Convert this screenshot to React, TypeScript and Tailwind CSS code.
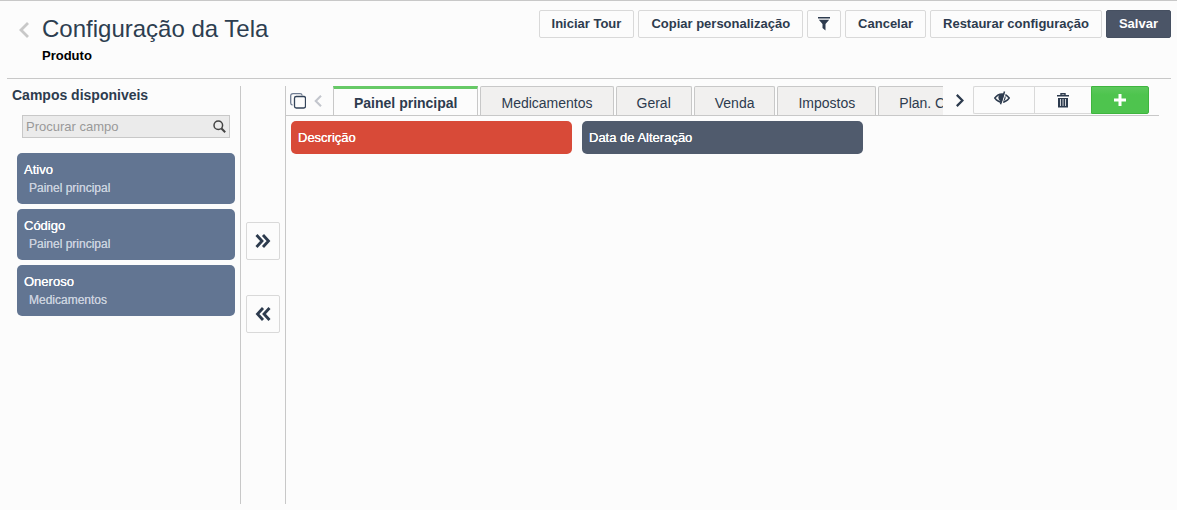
import React from 'react';

interface Field {
  id: string;
  label: string;
  panel: string;
}

const availableFields: Field[] = [
  { id: 'ativo', label: 'Ativo', panel: 'Painel principal' },
  { id: 'codigo', label: 'Código', panel: 'Painel principal' },
  { id: 'oneroso', label: 'Oneroso', panel: 'Medicamentos' }
];

const tabs = ['Painel principal', 'Medicamentos', 'Geral', 'Venda', 'Impostos', 'Plan. Contas'];

const panelFields = [
  { id: 'descricao', label: 'Descrição', color: 'bg-[#d84a38]' },
  { id: 'data_alteracao', label: 'Data de Alteração', color: 'bg-[#505b6d]' }
];

interface ChevronProps {
  className?: string;
  direction: 'left' | 'right';
}

const Chevron: React.FC<ChevronProps> = ({ className, direction }) => (
  <svg viewBox="0 0 10 16" fill="none" stroke="currentColor" className={className}>
    <path d={direction === 'left' ? 'M9 1 2 8l7 7' : 'M1 1l7 7-7 7'} strokeWidth="2.8" />
  </svg>
);

const DoubleChevron: React.FC<{ direction: 'left' | 'right' }> = ({ direction }) => (
  <svg viewBox="0 0 16 14" fill="none" stroke="currentColor" strokeWidth="2.8" className="w-4 h-3.5">
    {direction === 'right' ? (
      <path d="M1.5 1 7 7l-5.5 6M8 1l5.500 6L8 13" />
    ) : (
      <path d="M8 1 2.500 7 8 13M14.500 1 9 7l5.500 6" />
    )}
  </svg>
);

const FilterIcon = () => (
  <svg viewBox="0 0 12 14" fill="currentColor" className="w-3 h-3.5">
    <path d="M0 0h12v1.500H0ZM.8 2.800h10.400L7.500 7v6.500L4.500 11V7Z" />
  </svg>
);

const CopyIcon = () => (
  <svg viewBox="0 0 16 16" fill="none" className="w-4 h-4">
    <path d="M2.500 12C1.200 11.800.7 11.200.7 10V3C.7 1.500 1.500.7 3 .7h7c1.300 0 2 .6 2.200 1.800" stroke="#6f7c92" strokeWidth="1.300" />
    <rect x="4.500" y="3.500" width="11" height="11.500" rx="1.800" stroke="#34445a" strokeWidth="1.300" />
  </svg>
);

const SearchIcon = () => (
  <svg viewBox="0 0 13 13" fill="none" stroke="#444" className="w-[13px] h-[13px]">
    <circle cx="5.300" cy="5.300" r="4.300" strokeWidth="1.500" />
    <path d="M8.500 8.500 12.200 12.200" strokeWidth="2" />
  </svg>
);

const EyeOffIcon = () => (
  <svg viewBox="0 0 16 14" fill="none" stroke="currentColor" className="w-4 h-3.5">
    <path d="M.8 7C3 4 5.300 2.900 8 2.900S13 4 15.200 7C13 10 10.700 11.100 8 11.100S3 10 .8 7Z" strokeWidth="1.500" />
    <circle cx="8" cy="6.600" r="3.600" fill="currentColor" stroke="none" />
    <path d="M11.700.8 7.700 13.600" stroke="#fcfcfc" strokeWidth="1.200" />
    <path d="M10.500.5 6.500 13.300" strokeWidth="1.500" />
  </svg>
);

const TrashIcon = () => (
  <svg viewBox="0 0 12 15" fill="none" stroke="currentColor" className="w-3 h-[15px]">
    <path d="M4 2V.7h4V2M0 2.700h12" strokeWidth="1.400" />
    <path d="M1 5h10v9.500H1Z" fill="currentColor" stroke="none" />
    <path d="M3.500 6v7M6 6v7M8.500 6v7" stroke="#fcfcfc" strokeWidth="0.800" />
  </svg>
);

interface ToolbarButtonProps {
  children: React.ReactNode;
  label?: string;
  primary?: boolean;
}

const ToolbarButton: React.FC<ToolbarButtonProps> = ({ children, label, primary }) => (
  <button
    type="button"
    aria-label={label}
    className={`flex items-center h-7 rounded-xs border text-[13px] leading-4 font-bold whitespace-nowrap ${
      label ? 'px-[10px]' : 'px-3'
    } ${
      primary
        ? 'border-[#465061] bg-[#4b5567] text-white'
        : 'border-[#d9d9d9] bg-[#fcfcfc] text-[#2d3b4e]'
    }`}
  >
    {children}
  </button>
);

const FieldSidebar = () => (
  <aside className="w-[234px] shrink-0 border-r border-[#c8c8c8]">
    <h2 className="pl-[5px] text-sm leading-[18px] font-bold text-[#2d3b4e]">Campos disponiveis</h2>

    <div className="flex items-center mt-[11px] ml-[15px] mr-[10px] h-[23px] pl-[3px] pr-[3px] border border-[#c8c8c8] bg-[#ebebeb]">
      <input
        type="text"
        aria-label="Procurar campo"
        placeholder="Procurar campo"
        className="flex-1 min-w-0 bg-transparent text-[13px] leading-4 outline-none placeholder:text-[#999]"
      />
      <button type="button" aria-label="Buscar">
        <SearchIcon />
      </button>
    </div>

    <ul className="flex flex-col gap-[5px] mt-[15px] ml-[10px] mr-[5px]">
      {availableFields.map(field => (
        <li key={field.id} className="h-[51px] pt-2 pl-[7px] rounded-[5px] bg-[#627592]">
          <div className="text-[13px] leading-[18px] text-white [text-shadow:0_0_0_currentColor]">{field.label}</div>
          <div className="pl-[5px] text-xs leading-[18px] text-[#c9d1de] [text-shadow:0_0_0_currentColor]">{field.panel}</div>
        </li>
      ))}
    </ul>
  </aside>
);

const MoveButtons = () => (
  <div className="flex flex-col items-center gap-[35px] w-[45px] shrink-0 pt-[136px] border-r border-[#c8c8c8] text-[#2d3b4e]">
    <button type="button" aria-label="Adicionar campo" className="flex items-center justify-center w-[34px] h-[38px] rounded-xs border border-[#d9d9d9]">
      <DoubleChevron direction="right" />
    </button>
    <button type="button" aria-label="Remover campo" className="flex items-center justify-center w-[34px] h-[38px] rounded-xs border border-[#d9d9d9]">
      <DoubleChevron direction="left" />
    </button>
  </div>
);

const TabBar = () => (
  <div className="flex h-[30px] border-b border-[#c8c8c8] text-[#2d3b4e]">
    <div className="flex items-center w-[47px] shrink-0 pl-1 gap-2">
      <button type="button" aria-label="Duplicar painel">
        <CopyIcon />
      </button>
      <button type="button" aria-label="Abas anteriores">
        <Chevron direction="left" className="w-2 h-3 text-[#c3c6cd]" />
      </button>
    </div>

    <div role="tablist" className="flex flex-1 min-w-0 gap-[2px] overflow-hidden">
      {tabs.map((tab, index) => (
        <button
          key={tab}
          type="button"
          role="tab"
          aria-selected={index === 0}
          className={`shrink-0 px-5 border-x text-sm leading-5 whitespace-nowrap ${
            index === 0
              ? 'pt-px border-x-[#c8c8c8] border-t-3 border-t-[#66c966] font-bold'
              : 'pt-[3px] border-t rounded-t-xs border-[#c8c8c8] bg-[#f1f0ef]'
          }`}
        >
          {tab}
        </button>
      ))}
    </div>

    <button type="button" aria-label="Próximas abas" className="flex items-center justify-center w-[30px] shrink-0 pl-1">
      <Chevron direction="right" className="w-2 h-[13px]" />
    </button>

    <div className="flex h-7 shrink-0 mr-[10px]">
      <button type="button" aria-label="Ocultar painel" className="flex items-center justify-center w-[61px] rounded-l-xs border border-r-0 border-[#d9d9d9] pr-1 pb-1">
        <EyeOffIcon />
      </button>
      <button type="button" aria-label="Excluir painel" className="flex items-center justify-center w-[57px] border border-r-0 border-[#d9d9d9]">
        <TrashIcon />
      </button>
      <button type="button" aria-label="Adicionar painel" className="flex items-center justify-center w-[58px] rounded-r-xs border border-[#3fb53f] bg-linear-to-b from-[#5cc95c] to-[#4ec44e] to-30% text-white">
        <svg viewBox="0 0 12 12" stroke="currentColor" strokeWidth="3" className="w-3 h-3">
          <path d="M6 0v12M0 6h12" />
        </svg>
      </button>
    </div>
  </div>
);

const App: React.FC = () => {
  return (
    <div className="flex flex-col min-h-screen border-t border-[#c8c8c8] bg-[#fcfcfc] pb-[6px] font-['Liberation_Sans',Arial,sans-serif]">
      <header className="flex justify-between ml-[7px] mr-[6px] h-[78px] border-b border-[#c8c8c8]">
        <div className="flex pl-3 pt-[14px] gap-[13px]">
          <button type="button" aria-label="Voltar" className="self-start mt-[6px]">
            <Chevron direction="left" className="w-[10px] h-[18px] text-[#c8c8c8]" />
          </button>
          <div>
            <h1 className="text-2xl leading-7 text-[#2d3e50]">Configuração da Tela</h1>
            <p className="mt-[5px] text-[13px] leading-4 font-bold text-black">Produto</p>
          </div>
        </div>

        <div className="flex items-start gap-1 pt-[9px]">
          <ToolbarButton>Iniciar Tour</ToolbarButton>
          <ToolbarButton>Copiar personalização</ToolbarButton>
          <ToolbarButton label="Filtrar">
            <FilterIcon />
          </ToolbarButton>
          <ToolbarButton>Cancelar</ToolbarButton>
          <ToolbarButton>Restaurar configuração</ToolbarButton>
          <ToolbarButton primary>Salvar</ToolbarButton>
        </div>
      </header>

      <div className="flex flex-1 pt-[7px] pl-[7px] pr-[18px]">
        <FieldSidebar />
        <MoveButtons />

        <main className="flex-1 min-w-0">
          <TabBar />
          <div role="tabpanel" className="grid grid-cols-3 gap-[10px] px-[5px] pt-[5px]">
            {panelFields.map(field => (
              <div
                key={field.id}
                className={`h-[33px] px-[7px] rounded-[5px] text-[13px] leading-[33px] text-white [text-shadow:0_0_0_currentColor] ${field.color}`}
              >
                {field.label}
              </div>
            ))}
          </div>
        </main>
      </div>
    </div>
  );
};

export default App;
